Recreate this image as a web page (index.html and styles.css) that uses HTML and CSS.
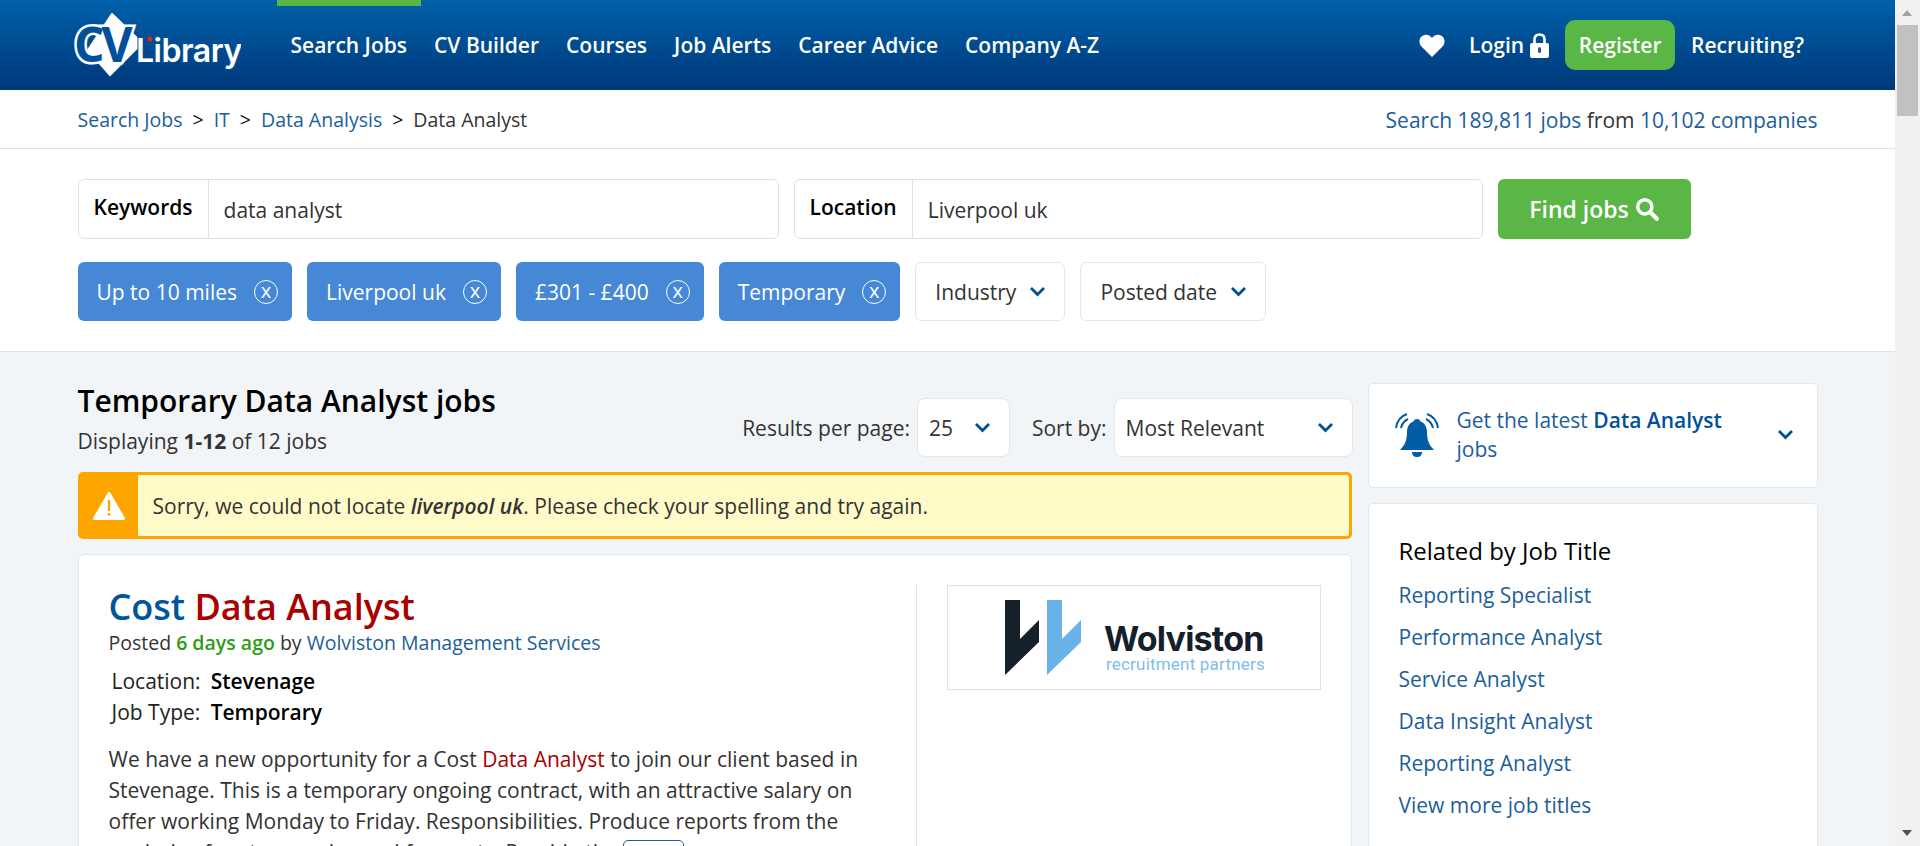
FILE: index.html
```html
<!DOCTYPE html>
<html lang="en">
<head>
  <meta charset="UTF-8" />
  <title>Temporary Data Analyst jobs</title>
  <link rel="stylesheet" href="styles.css">
</head>
<body>
<div class="page">

  <header class="top">
    <a class="logo" href="#">
      <svg width="168" height="76" viewBox="0 0 168 76">
        <path d="M39 14 L69 43 L37 75 L15 50 Z" fill="#fff" stroke="#fff" stroke-width="2" stroke-linejoin="round"/>
        <text class="logo-cv" x="1" y="62">CV</text>
        <text class="logo-lib" x="63" y="62">Library</text>
        <circle cx="77" cy="39" r="2.600" fill="#e2202c"/>
      </svg>
    </a>
    <nav class="nav">
      <a class="active" href="#">Search Jobs</a>
      <a href="#">CV Builder</a>
      <a href="#">Courses</a>
      <a href="#">Job Alerts</a>
      <a href="#">Career Advice</a>
      <a href="#">Company A-Z</a>
    </nav>
    <div class="account">
      <svg class="heart" width="26" height="23" viewBox="0 0 26 23"><path d="M13 23 L2.500 12.500 C-1 9 0 2 6 .8 C9 .2 11.500 1.500 13 4 C14.500 1.500 17 .2 20 .8 C26 2 27 9 23.500 12.500 Z" fill="#fff"/></svg>
      <a class="login" href="#">Login
        <svg width="19" height="25" viewBox="0 0 19 25"><path d="M4.500 11 V6.500 C4.500 3 6.500 1.500 9.500 1.500 S14.500 3 14.500 6.500 V11" fill="none" stroke="#fff" stroke-width="2.600"/><rect x="0" y="10" width="19" height="15" rx="2" fill="#fff"/><rect x="8" y="14" width="3" height="6" rx="1.500" fill="#1c5a96"/></svg>
      </a>
      <a class="register" href="#">Register</a>
      <a class="recruiting" href="#">Recruiting?</a>
    </div>
  </header>

  <div class="crumbs">
    <div class="wrap crumbs-row">
      <div class="crumb-links">
        <a href="#">Search Jobs</a><span class="sep">&gt;</span><a href="#">IT</a><span class="sep">&gt;</span><a href="#">Data Analysis</a><span class="sep">&gt;</span>Data Analyst
      </div>
      <div><a href="#">Search 189,811 jobs</a> from <a href="#">10,102 companies</a></div>
    </div>
  </div>

  <section class="search">
    <div class="wrap">
      <form class="search-row">
        <div class="field field-key"><label>Keywords</label><span class="value">data analyst</span></div>
        <div class="field field-loc"><label>Location</label><span class="value">Liverpool uk</span></div>
        <button class="find" type="button">Find jobs
          <svg width="24" height="24" viewBox="0 0 22 22"><circle cx="9" cy="9" r="6.500" fill="none" stroke="#fff" stroke-width="3.200"/><path d="M14 14 L20 20" stroke="#fff" stroke-width="3.800" stroke-linecap="round"/></svg>
        </button>
      </form>
      <div class="chips">
        <a class="chip" href="#">Up to 10 miles<span class="x">x</span></a>
        <a class="chip" href="#">Liverpool uk<span class="x">x</span></a>
        <a class="chip" href="#">£301 - £400<span class="x">x</span></a>
        <a class="chip" href="#">Temporary<span class="x">x</span></a>
        <a class="drop" href="#">Industry<svg class="chev" width="17" height="11" viewBox="0 0 17 11"><path d="M2 2 L8.500 8.500 L15 2" /></svg></a>
        <a class="drop" href="#">Posted date<svg class="chev" width="17" height="11" viewBox="0 0 17 11"><path d="M2 2 L8.500 8.500 L15 2" /></svg></a>
      </div>
    </div>
  </section>

  <main class="wrap results">
    <div class="left">
      <div class="results-head">
        <div>
          <h1>Temporary Data Analyst jobs</h1>
          <p class="count">Displaying <b>1-12</b> of 12 jobs</p>
        </div>
        <div class="sorting">
          <span>Results per page:</span>
          <div class="select select-num">25<svg class="chev" width="17" height="11" viewBox="0 0 17 11"><path d="M2 2 L8.500 8.500 L15 2" /></svg></div>
          <span class="sort-label">Sort by:</span>
          <div class="select select-sort">Most Relevant<svg class="chev" width="17" height="11" viewBox="0 0 17 11"><path d="M2 2 L8.500 8.500 L15 2" /></svg></div>
        </div>
      </div>

      <div class="notice">
        <div class="notice-icon">
          <svg width="32" height="28" viewBox="0 0 32 28"><path d="M16 1.500 L30.500 26.500 H1.500 Z" fill="#fff" stroke="#fff" stroke-width="3" stroke-linejoin="round"/><rect x="14.800" y="8" width="2.400" height="11" fill="#ffa500"/><rect x="14.800" y="21" width="2.400" height="2.600" fill="#ffa500"/></svg>
        </div>
        <p>Sorry, we could not locate <b><i>liverpool uk</i></b>. Please check your spelling and try again.</p>
      </div>

      <article class="job">
        <div class="job-main">
          <h2><a href="#">Cost <em>Data Analyst</em></a></h2>
          <p class="posted">Posted <span class="ago">6 days ago</span> by <a href="#">Wolviston Management Services</a></p>
          <dl class="facts">
            <dt>Location:</dt><dd>Stevenage</dd>
            <dt>Job Type:</dt><dd>Temporary</dd>
          </dl>
          <p class="desc">We have a new opportunity for a Cost <em>Data Analyst</em> to join our client based in Stevenage. This is a temporary ongoing contract, with an attractive salary on offer working Monday to Friday. Responsibilities. Produce reports from the analysis of costs, margins and forecasts. Provide the <a class="more" href="#">more</a></p>
        </div>
        <div class="job-side">
          <a class="company-logo" href="#">
            <svg width="262" height="76" viewBox="0 0 262 76">
              <polygon points="0,0 15,0 15,39 34,20 34,42 0,75" fill="#15202b"/>
              <polygon points="42,0 57,0 57,39 76,20 76,42 42,75" fill="#69b2e8"/>
              <text class="wol-name" x="99" y="51">Wolviston</text>
              <text class="wol-sub" x="101" y="70">recruitment partners</text>
            </svg>
          </a>
        </div>
      </article>
    </div>

    <aside class="right">
      <a class="alerts card" href="#">
        <svg class="bell" width="44" height="46" viewBox="0 0 44 46">
          <path d="M22 7 C24 7 25 8 25.500 9.500 C30 11 32 15 32 20 C32 28 34 33 39 38 H5 C10 33 12 28 12 20 C12 15 14 11 18.500 9.500 C19 8 20 7 22 7 Z" fill="#005ca5"/>
          <path d="M17 40 H27 C27 43 25 45 22 45 S17 43 17 40 Z" fill="#005ca5"/>
          <path d="M1 16 C2 9 6 4 12 2 M43 16 C42 9 38 4 32 2 M6 16 C7 12 9 9 13 7 M38 16 C37 12 35 9 31 7" fill="none" stroke="#005ca5" stroke-width="2"/>
        </svg>
        <span class="alerts-text">Get the latest <b>Data Analyst</b> jobs</span>
        <svg class="chev" width="17" height="11" viewBox="0 0 17 11"><path d="M2 2 L8.500 8.500 L15 2" /></svg>
      </a>
      <div class="related card">
        <h3>Related by Job Title</h3>
        <ul>
          <li><a href="#">Reporting Specialist</a></li>
          <li><a href="#">Performance Analyst</a></li>
          <li><a href="#">Service Analyst</a></li>
          <li><a href="#">Data Insight Analyst</a></li>
          <li><a href="#">Reporting Analyst</a></li>
          <li><a href="#">View more job titles</a></li>
        </ul>
      </div>
    </aside>
  </main>
</div>

<div class="scrollbar">
  <span class="arrow-up"></span>
  <span class="thumb"></span>
  <span class="arrow-down"></span>
</div>
</body>
</html>
```

FILE: styles.css
```css
* {
  box-sizing: border-box;
}
html, body {
  margin: 0;
  height: 846px;
  overflow: hidden;
}
body {
  display: flex;
  font-family: "Open Sans", "Liberation Sans", sans-serif;
  font-size: 21px;
  color: #333;
  background: #f2f5f8;
}
a {
  color: #1c5e9b;
  text-decoration: none;
}
p, h1, h2, h3, ul, dl, dd {
  margin: 0;
  padding: 0;
}
.page {
  width: 1895px;
  flex: none;
}
.wrap {
  width: 1740px;
  margin: 0 auto;
}

/* header */
.top {
  height: 90px;
  background: linear-gradient(#0060a9, #00387a);
  display: flex;
  align-items: flex-start;
  padding-left: 73px;
  padding-right: 91px;
  color: #fff;
}
.logo {
  display: block;
  width: 168px;
  height: 76px;
  margin-right: 36px;
}
.logo-cv {
  font-family: "Open Sans", sans-serif;
  font-size: 48px;
  font-weight: 700;
  fill: #00509b;
  stroke: #fff;
  stroke-width: 5px;
  paint-order: stroke;
  letter-spacing: -3px;
}
.logo-lib {
  font-family: "Inter", sans-serif;
  font-size: 32px;
  font-weight: 600;
  fill: #fff;
  stroke: #00509b;
  stroke-width: 2px;
  paint-order: stroke;
  letter-spacing: -.5px;
}
.nav {
  display: flex;
}
.nav a {
  display: block;
  color: #fff;
  font-size: 21px;
  font-weight: 600;
  line-height: 28px;
  padding: 25px 13.5px 0;
  border-top: 6px solid transparent;
}
.nav a.active {
  border-top-color: #5ab645;
}
.account {
  margin-left: auto;
  display: flex;
  align-items: center;
  height: 90px;
}
.account a {
  color: #fff;
  font-size: 21px;
  font-weight: 600;
}
.heart {
  margin-right: 24px;
}
.login {
  display: flex;
  align-items: center;
  gap: 6px;
  margin-right: 16px;
}
.register {
  background: #5ab645;
  border-radius: 10px;
  width: 110px;
  height: 50px;
  line-height: 50px;
  text-align: center;
  margin-right: 16px;
}

/* breadcrumb */
.crumbs {
  background: #fff;
  height: 59px;
  border-bottom: 1px solid #e2e2e2;
}
.crumbs-row {
  display: flex;
  justify-content: space-between;
  height: 58px;
  align-items: center;
  padding-top: 1px;
}
.crumb-links {
  font-size: 19.500px;
}
.sep {
  color: #111;
  margin: 0 10px;
}

/* search */
.search {
  background: #fff;
  height: 203px;
  border-bottom: 1px solid #dfe2e6;
  padding-top: 30px;
}
.search-row {
  display: flex;
  gap: 15px;
}
.field {
  display: flex;
  height: 60px;
  border: 1px solid #e2e2e2;
  border-radius: 6px;
  background: #fff;
}
.field label {
  font-weight: 600;
  color: #000;
  padding: 0 15px;
  line-height: 54px;
  border-right: 1px solid #e2e2e2;
}
.field .value {
  padding-left: 15px;
  line-height: 60px;
}
.field-key {
  width: 701px;
}
.field-loc {
  width: 689px;
}
.find {
  width: 193px;
  height: 60px;
  border: none;
  border-radius: 6px;
  background: #5ab645;
  color: #fff;
  font: 600 23px "Open Sans", sans-serif;
  display: flex;
  align-items: center;
  justify-content: center;
  gap: 6px;
}
.chips {
  display: flex;
  gap: 15px;
  margin-top: 23px;
}
.chip, .drop {
  display: flex;
  align-items: center;
  height: 59px;
  border-radius: 6px;
  padding: 0 19px;
}
.chip {
  background: #4688d6;
  color: #fff;
  padding-right: 14px;
}
.x {
  width: 24px;
  height: 24px;
  margin-left: 17px;
  border: 1px solid #fff;
  border-radius: 50%;
  font-size: 20px;
  line-height: 19px;
  text-align: center;
}
.drop {
  background: #fff;
  color: #333;
  border: 1px solid #e4e6ea;
  padding-right: 18px;
  gap: 13px;
}
.chev {
  flex: none;
}
.chev path {
  fill: none;
  stroke: #00508f;
  stroke-width: 2.800;
}

/* results */
.results {
  display: flex;
  gap: 16px;
}
.left {
  width: 1274px;
}
.right {
  width: 450px;
  padding-top: 31px;
}
.results-head {
  display: flex;
  justify-content: space-between;
  height: 120px;
  padding-top: 30px;
}
h1 {
  font-size: 30px;
  font-weight: 600;
  color: #000;
  line-height: 38px;
}
.count {
  line-height: 26px;
  margin-top: 8px;
}
.sorting {
  display: flex;
  align-items: center;
  height: 59px;
  margin-top: 16px;
  margin-right: -1px;
}
.sort-label {
  margin-left: 22px;
}
.select {
  display: flex;
  align-items: center;
  justify-content: space-between;
  height: 59px;
  margin-left: 7px;
  padding: 0 18px 0 11px;
  background: #fff;
  border: 1px solid #e4e6ea;
  border-radius: 8px;
}
.select-num {
  width: 93px;
}
.select-sort {
  width: 239px;
}

/* notice */
.notice {
  display: flex;
  align-items: center;
  height: 67px;
  background: #fffbc9;
  border: 3px solid #ffa500;
  border-radius: 5px;
}
.notice-icon {
  width: 58px;
  height: 100%;
  margin-left: -1px;
  background: #ffa500;
  display: flex;
  align-items: center;
  justify-content: center;
}
.notice p {
  padding-left: 15px;
}
.notice b {
  font-weight: 600;
}

/* job card */
.job {
  display: flex;
  margin-top: 15px;
  padding: 30px 30px 0;
  height: 400px;
  background: #fff;
  border: 1px solid #e2e6ea;
  border-radius: 6px;
}
.job-main {
  width: 808px;
  padding-right: 30px;
  border-right: 1px solid #e2e2e2;
}
.job-side {
  padding-left: 30px;
}
h2 {
  font-size: 36px;
  font-weight: 600;
  line-height: 44px;
}
h2 a {
  color: #00559d;
}
em {
  font-style: normal;
  color: #a80000;
}
.posted {
  font-size: 19.500px;
  line-height: 26px;
  margin-top: 1px;
}
.ago {
  color: #2d9c14;
  font-weight: 600;
}
.facts {
  display: grid;
  grid-template-columns: auto 1fr;
  column-gap: 10px;
  line-height: 31px;
  margin-top: 10px;
  padding-left: 3px;
  color: #222;
}
.facts dd {
  font-weight: 600;
  color: #000;
}
.desc {
  line-height: 31px;
  margin-top: 16px;
}
.more {
  display: inline-block;
  border: 1px solid #1c5e9b;
  border-radius: 5px;
  padding: 0 7px;
  font-size: 18px;
  line-height: 24px;
}
.company-logo {
  display: block;
  width: 374px;
  height: 105px;
  border: 1px solid #e2e2e2;
  padding: 14px 0 0 57px;
}
.wol-name {
  font-family: "Inter", sans-serif;
  font-size: 34px;
  font-weight: 700;
  fill: #15202b;
  letter-spacing: -.8px;
}
.wol-sub {
  font-family: "Roboto", sans-serif;
  font-size: 17px;
  letter-spacing: .2px;
  fill: #7fbdea;
}

/* sidebar */
.card {
  background: #fff;
  border: 1px solid #e2e6ea;
  border-radius: 5px;
}
.alerts {
  display: flex;
  align-items: center;
  height: 105px;
  padding: 0 23px 2px 26px;
  color: #1c5e9b;
  line-height: 29px;
}
.alerts-text {
  flex: 1;
  margin-left: 18px;
  margin-right: 30px;
}
.alerts-text b {
  font-weight: 600;
  color: #00509b;
}
.related {
  margin-top: 15px;
  padding: 30px 30px 0;
  height: 400px;
}
h3 {
  font-size: 24px;
  font-weight: 400;
  color: #000;
  line-height: 34px;
}
.related ul {
  list-style: none;
  margin-top: 6px;
}
.related li {
  line-height: 42px;
}

/* scrollbar */
.scrollbar {
  position: relative;
  width: 25px;
  flex: none;
  height: 846px;
  background: #f1f1f1;
}
.thumb {
  position: absolute;
  left: 2px;
  top: 25px;
  width: 21px;
  height: 91px;
  background: #c1c1c1;
}
.arrow-up, .arrow-down {
  position: absolute;
  left: 7px;
  width: 0;
  height: 0;
  border-left: 5.500px solid transparent;
  border-right: 5.500px solid transparent;
}
.arrow-up {
  top: 10px;
  border-bottom: 6px solid #a3a3a3;
}
.arrow-down {
  bottom: 10px;
  border-top: 6px solid #505050;
}
```
